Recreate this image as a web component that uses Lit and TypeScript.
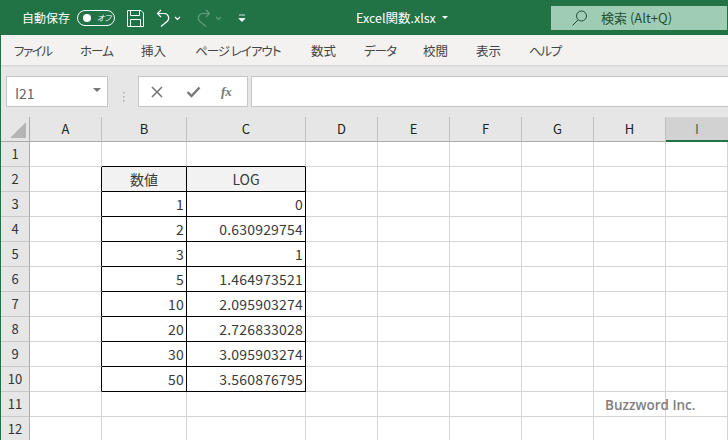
import { LitElement, html, css } from "lit";
import { customElement } from "lit/decorators.js";

const COLS = ["A", "B", "C", "D", "E", "F", "G", "H", "I"];
const DATA: [string, string][] = [
  ["1", "0"],
  ["2", "0.630929754"],
  ["3", "1"],
  ["5", "1.464973521"],
  ["10", "2.095903274"],
  ["20", "2.726833028"],
  ["30", "3.095903274"],
  ["50", "3.560876795"],
];
const TABS: [string, number, number][] = [
  ["ファイル", 66, -1.4],
  ["ホーム", 61, -1],
  ["挿入", 54, 0],
  ["ページ レイアウト", 116, -1],
  ["数式", 53, 0],
  ["データ", 59, -1],
  ["校閲", 53, 0],
  ["表示", 53, 0],
  ["ヘルプ", 40, -1.300],
];

@customElement("app-root")
export class AppRoot extends LitElement {
  static styles = css`
    :host {
      display: block;
      width: 728px;
      height: 440px;
      overflow: hidden;
      position: relative;
      background: #fff;
      font-family: "Noto Sans CJK JP", "Noto Sans", sans-serif;
      font-feature-settings: "palt";
      color: #333;
    }
    .title {
      height: 35px;
      background: #217346;
      display: flex;
      align-items: center;
      color: #fff;
      font-size: 12px;
      padding-left: 22px;
      box-sizing: border-box;
    }
    .autosave { width: 49px; white-space: nowrap; flex: none; margin-top: -1px; }
    .toggle {
      margin-left: 6px;
      width: 36px;
      height: 14px;
      border: 1px solid #fff;
      border-radius: 8px;
      display: flex;
      align-items: center;
      flex: none;
      font-size: 8px;
      font-style: italic;
      gap: 6px;
    }
    .knob { width: 8px; height: 8px; border-radius: 50%; background: #fff; margin-left: 5px; }
    .qa { display: block; flex: none; }
    .filename { margin-left: 101px; font-size: 12.500px; width: 94px; white-space: nowrap; flex: none; display: flex; align-items: center; }
    .caret { width: 0; height: 0; border: 3px solid transparent; border-top: 3px solid #fff; border-bottom: 0; margin-left: 6px; }
    .search {
      margin-left: 101px;
      width: 176px;
      height: 24px;
      background: #9fcdb3;
      color: #1e4e33;
      display: flex;
      align-items: center;
      font-size: 13px;
      flex: none;
    }
    .search svg { margin-left: 20px; flex: none; }
    .search span { margin-left: 12px; white-space: nowrap; }
    .tabs {
      height: 30px;
      background: #f3f2f1;
      display: flex;
      align-items: center;
      font-size: 12.500px;
      color: #444;
      padding-left: 13px;
      box-sizing: border-box;
      border-left: 1px solid #217346;
    }
    .tabs span { white-space: nowrap; flex: none; }
    .formula {
      height: 52px;
      background: linear-gradient(#d6d6d6 0, #e9e9e9 3px, #e6e6e6 6px);
      display: flex;
      padding: 11px 0 0 5px;
      box-sizing: border-box;
      border-left: 1px solid #217346;
    }
    .box {
      height: 31px;
      background: #fff;
      border: 1px solid #c6c6c6;
      box-sizing: border-box;
      display: flex;
      align-items: center;
    }
    .name {
      width: 102px;
      padding: 3px 6px 0 8px;
      font-size: 14px;
      color: #666;
      justify-content: space-between;
    }
    .arrow { width: 0; height: 0; border: 4px solid transparent; border-top: 4px solid #777; border-bottom: 0; margin-top: -6px; }
    .dots { width: 30px; display: flex; justify-content: center; align-items: center; }
    .fx { width: 110px; color: #777; }
    .fx svg { flex: none; }
    .x { margin-left: 12px; }
    .ok { margin-left: 23px; }
    .fxt { font-family: "Liberation Serif", serif; font-style: italic; font-size: 13px; font-weight: 700; color: #777; margin-left: 20px; }
    .input { flex: 1; margin-left: 3px; border-right: 0; }
    .sheet {
      display: grid;
      grid-template-columns: 29px 72px 85px 119px 72px 72px 72px 72px 72px 1fr;
      grid-auto-rows: 25px;
      font-size: 14px;
      color: #3a3a3a;
      border-left: 1px solid #217346;
      box-sizing: border-box;
    }
    .ch {
      background: #e6e6e6;
      border-bottom: 1px solid #ababab;
      border-right: 1px solid #c0c0c0;
      box-sizing: border-box;
      text-align: center;
      line-height: 24px;
      font-size: 13px;
      color: #222;
    }
    .ch.sel { background: #d2d2d2; border-bottom: 2px solid #217346; border-right: 0; color: #217346; }
    .corner { position: relative; border-right: 1px solid #ababab; }
    .corner::after {
      content: "";
      position: absolute;
      right: 3px;
      bottom: 3px;
      width: 0;
      height: 0;
      border-left: 16px solid transparent;
      border-bottom: 16px solid #b5b5b5;
    }
    .rh {
      background: #e6e6e6;
      border-right: 1px solid #ababab;
      border-bottom: 1px solid #c8c8c8;
      box-sizing: border-box;
      text-align: center;
      line-height: 24px;
      font-size: 13px;
      color: #333;
    }
    .c {
      border-right: 1px solid #d4d4d4;
      border-bottom: 1px solid #d4d4d4;
      box-sizing: border-box;
      line-height: 24px;
      white-space: nowrap;
      overflow: hidden;
    }
    .c.num { text-align: right; padding-right: 2px; letter-spacing: 0.2px; }
    .c.hd { text-align: center; background: #f2f2f2; }
    .c.br { border-right-color: #000; }
    .c.bb { border-bottom-color: #000; }
    .mark {
      position: absolute;
      left: 605px;
      top: 396px;
      font-family: "Open Sans", sans-serif;
      font-size: 13.500px;
      font-weight: 600;
      color: #7f7f7f;
      white-space: nowrap;
    }
  `;

  private qaIcons() {
    return html`<svg class="qa" width="140" height="35" viewBox="0 0 140 35" fill="none" stroke="#fff" stroke-width="1">
      <path d="M12.500 10.500h13.500l2.500 2.500v13.500h-16z"/>
      <path d="M15.500 10.500v5h9v-5M15.500 26.500v-7h10v7"/>
      <path d="M46 10l-3.500 3.500 3.500 3.500M43 13.500h6.500a4.500 4.500 0 0 1 2.500 8l-6 5" stroke-width="1.200"/>
      <path d="M60 17l2.500 2.500 2.500-2.500" stroke-width="1.200"/>
      <g stroke="#5f9d7c" stroke-width="1.200">
        <path d="M91 10l3.500 3.500-3.500 3.500M94 13.500h-6.500a4.500 4.500 0 0 0-2.500 8l6 5"/>
        <path d="M101 17l2.500 2.500 2.500-2.500"/>
      </g>
      <path d="M124 15h6M124 18.500h6l-3 3z" fill="#fff" stroke-width="0.800"/>
    </svg>`;
  }

  render() {
    const rows = Array.from({ length: 12 }, (_, i) => i + 1);
    return html`
      <div class="title">
        <span class="autosave">自動保存</span>
        <span class="toggle"><span class="knob"></span><span>オフ</span></span>
        ${this.qaIcons()}
        <span class="filename">Excel関数.xlsx<span class="caret"></span></span>
        <span class="search">
          <svg width="18" height="18" viewBox="0 0 18 18" fill="none" stroke="#1e4e33" stroke-width="1">
            <circle cx="10.500" cy="7" r="5"/>
            <path d="M7 11l-5.500 5.500"/>
          </svg>
          <span>検索 (Alt+Q)</span>
        </span>
      </div>
      <div class="tabs">
        ${TABS.map(([t, w, s]) => html`<span style="width:${w}px;letter-spacing:${s}px">${t}</span>`)}
      </div>
      <div class="formula">
        <div class="box name"><span>I21</span><span class="arrow"></span></div>
        <div class="dots">
          <svg width="3" height="12" viewBox="0 0 3 12" fill="#aaa"><rect x="1" y="1" width="1.500" height="1.500"/><rect x="1" y="5" width="1.500" height="1.500"/><rect x="1" y="9" width="1.500" height="1.500"/></svg>
        </div>
        <div class="box fx">
          <svg class="x" width="12" height="12" viewBox="0 0 12 12" fill="none" stroke="#777" stroke-width="1.600"><path d="M1 1l10 10M11 1L1 11"/></svg>
          <svg class="ok" width="15" height="12" viewBox="0 0 15 12" fill="none" stroke="#777" stroke-width="2.400"><path d="M1.500 6l4 4 8-8.500"/></svg>
          <span class="fxt">fx</span>
        </div>
        <div class="box input"></div>
      </div>
      <div class="sheet">
        <div class="ch corner"></div>
        ${COLS.map((c, i) => html`<div class="ch ${i === 8 ? "sel" : ""}">${c}</div>`)}
        ${rows.map((r) => html`
          <div class="rh">${r}</div>
          ${COLS.map((_, i) => this.cell(r, i))}
        `)}
      </div>
      <div class="mark">Buzzword Inc.</div>
    `;
  }

  private cell(r: number, col: number) {
    const inTable = r >= 2 && r <= 10 && (col === 1 || col === 2);
    const classes = ["c"];
    // Table edges are drawn by the right/bottom border of the cell on that side.
    if (r >= 2 && r <= 10 && col >= 0 && col <= 2) classes.push("br");
    if (r >= 1 && r <= 10 && (col === 1 || col === 2)) classes.push("bb");
    let text = "";
    if (inTable) {
      if (r === 2) {
        classes.push("hd");
        text = col === 1 ? "数値" : "LOG";
      } else {
        classes.push("num");
        text = DATA[r - 3][col - 1];
      }
    }
    return html`<div class=${classes.join(" ")}>${text}</div>`;
  }
}
